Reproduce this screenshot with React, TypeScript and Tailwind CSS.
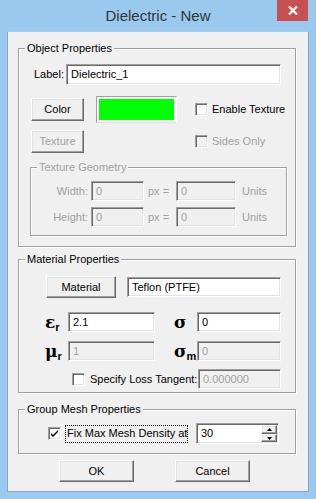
import React from 'react';

const font = { fontFamily: '"Liberation Sans", Arial, sans-serif' };

const sunken =
  'border border-t-[#a0a0a0] border-l-[#a0a0a0] border-r-white border-b-white shadow-[inset_1px_1px_0_#696969,inset_-1px_-1px_0_#e3e3e3]';
const raised =
  'border border-t-white border-l-white border-r-[#696969] border-b-[#696969] shadow-[inset_-1px_-1px_0_#a0a0a0,inset_1px_1px_0_#e3e3e3]';

function GroupBox({ title, className, disabled, children }: { title: string; className: string; disabled?: boolean; children: React.ReactNode }) {
  return (
    <div className={`relative border border-[#a0a0a0] shadow-[1px_1px_0_#fff,inset_1px_1px_0_#fff] ${className}`}>
      <span
        className={`absolute -top-[8px] left-[6px] bg-[#f0f0f0] px-[2px] leading-[14px] ${disabled ? 'text-[#a0a0a0]' : 'text-black'}`}
      >
        {title}
      </span>
      {children}
    </div>
  );
}

function Button({ label, className, disabled }: { label: string; className: string; disabled?: boolean }) {
  return (
    <div className={`flex items-center justify-center bg-[#f0f0f0] ${raised} ${disabled ? 'text-[#a0a0a0]' : 'text-black'} ${className}`}>
      {label}
    </div>
  );
}

function Input({ value, className, disabled }: { value: string; className: string; disabled?: boolean }) {
  return (
    <div
      className={`flex items-center pl-[4px] ${sunken} ${disabled ? 'bg-[#f0f0f0] text-[#a0a0a0]' : 'bg-white text-black'} ${className}`}
    >
      {value}
    </div>
  );
}

function Checkbox({ checked, disabled, className }: { checked?: boolean; disabled?: boolean; className?: string }) {
  return (
    <div
      className={`w-[13px] h-[13px] shrink-0 flex items-center justify-center ${sunken} ${disabled ? 'bg-[#f0f0f0]' : 'bg-white'} ${className ?? ''}`}
    >
      {checked && (
        <svg width="9" height="9" viewBox="0 0 9 9">
          <path d="M1 4 L3 6 L8 1 L8 3 L3 8 L1 6 Z" fill="#000" />
        </svg>
      )}
    </div>
  );
}

function Symbol({ base, sub }: { base: string; sub: string }) {
  return (
    <span className="flex items-end font-bold text-black" style={{ fontFamily: '"DejaVu Serif", "Liberation Serif", serif' }}>
      <span className="text-[17px] leading-[18px]">{base}</span>
      <span className="text-[11px] leading-[11px] mb-[-2px]" style={font}>{sub}</span>
    </span>
  );
}

export default function App() {
  return (
    <div className="w-[316px] h-[499px] bg-[#99c9ef] text-[11px] overflow-hidden" style={font}>
      {/* Title bar */}
      <div className="relative h-[31px] flex items-center justify-center">
        <span className="text-[15px] text-[#333333] pt-[1px]">Dielectric - New</span>
        <div className="absolute top-0 right-[8px] w-[31px] h-[21px] bg-[#c75050] flex items-center justify-center">
          <svg width="10" height="9" viewBox="0 0 10 9">
            <path d="M1 0.5 L9 8.5 M9 0.5 L1 8.5" stroke="#fff" strokeWidth="2.2" />
          </svg>
        </div>
      </div>

      {/* Client area */}
      <div className="ml-[7px] w-[302px] h-[461px] border border-[#83a7c9] border-t-[#a9cbe9] bg-[#f0f0f0] pt-[16px] pl-[10px]">
        {/* Object Properties */}
        <GroupBox title="Object Properties" className="w-[278px] h-[199px]">
          <div className="flex items-center mt-[15px] ml-[15px]">
            <span className="w-[32px]">Label:</span>
            <Input value="Dielectric_1" className="w-[215px] h-[21px]" />
          </div>
          <div className="flex items-center h-[27px] mt-[11px] ml-[12px]">
            <Button label="Color" className="w-[53px] h-[23px]" />
            <div className="ml-[12px] w-[81px] h-[27px] p-[2px] bg-white border border-t-[#a0a0a0] border-l-[#a0a0a0] border-r-white border-b-[#e3e3e3]">
              <div className="w-full h-full bg-[#00ff00]" />
            </div>
            <Checkbox className="ml-[18px]" />
            <span className="ml-[4px]">Enable Texture</span>
          </div>
          <div className="flex items-center h-[23px] mt-[7px] ml-[12px]">
            <Button label="Texture" className="w-[53px] h-[23px]" disabled />
            <Checkbox className="ml-[111px]" disabled />
            <span className="ml-[4px] text-[#a0a0a0]">Sides Only</span>
          </div>
          <GroupBox title="Texture Geometry" className="ml-[11px] mt-[14px] w-[257px] h-[69px]" disabled>
            <div className="flex items-center mt-[13px] text-[#a0a0a0]">
              <span className="w-[60px] text-right pr-[3px]">Width:</span>
              <Input value="0" className="w-[53px] h-[20px]" disabled />
              <span className="ml-[4px] w-[28px]">px =</span>
              <Input value="0" className="w-[60px] h-[20px]" disabled />
              <span className="ml-[6px]">Units</span>
            </div>
            <div className="flex items-center mt-[6px] text-[#a0a0a0]">
              <span className="w-[60px] text-right pr-[3px]">Height:</span>
              <Input value="0" className="w-[53px] h-[20px]" disabled />
              <span className="ml-[4px] w-[28px]">px =</span>
              <Input value="0" className="w-[60px] h-[20px]" disabled />
              <span className="ml-[6px]">Units</span>
            </div>
          </GroupBox>
        </GroupBox>

        {/* Material Properties */}
        <GroupBox title="Material Properties" className="mt-[12px] w-[278px] h-[134px]">
          <div className="flex items-center h-[22px] mt-[16px] ml-[27px]">
            <Button label="Material" className="w-[70px] h-[22px]" />
            <Input value="Teflon (PTFE)" className="ml-[11px] w-[154px] h-[20px]" />
          </div>
          <div className="flex items-center h-[20px] mt-[14px] ml-[26px]">
            <span className="w-[23px]"><Symbol base="ε" sub="r" /></span>
            <Input value="2.1" className="w-[87px] h-[20px]" />
            <span className="ml-[19px] w-[23px]"><Symbol base="σ" sub="" /></span>
            <Input value="0" className="w-[84px] h-[20px]" />
          </div>
          <div className="flex items-center h-[20px] mt-[9px] ml-[26px]">
            <span className="w-[23px]"><Symbol base="μ" sub="r" /></span>
            <Input value="1" className="w-[87px] h-[20px]" disabled />
            <span className="ml-[19px] w-[23px]"><Symbol base="σ" sub="m" /></span>
            <Input value="0" className="w-[84px] h-[20px]" disabled />
          </div>
          <div className="flex items-center h-[20px] mt-[8px] ml-[53px]">
            <Checkbox />
            <span className="ml-[5px] w-[108px]">Specify Loss Tangent:</span>
            <Input value="0.000000" className="w-[83px] h-[20px]" disabled />
          </div>
        </GroupBox>

        {/* Group Mesh Properties */}
        <GroupBox title="Group Mesh Properties" className="mt-[16px] w-[278px] h-[45px]">
          <div className="flex items-center h-[21px] mt-[13px] ml-[29px]">
            <Checkbox checked />
            <span className="ml-[4px] w-[123px] h-[18px] flex items-center pl-[1px] whitespace-nowrap border border-dotted border-black">
              Fix Max Mesh Density at
            </span>
            <div className={`relative ml-[8px] w-[83px] h-[21px] bg-white flex items-center pl-[4px] ${sunken}`}>
              30
              <div className="absolute right-[1px] top-[1px] w-[16px] h-[17px] flex flex-col">
                <div className={`h-[9px] bg-[#f0f0f0] flex items-center justify-center ${raised}`}>
                  <svg width="5" height="3" viewBox="0 0 5 3"><path d="M2.5 0 L5 3 L0 3 Z" fill="#000" /></svg>
                </div>
                <div className={`h-[8px] bg-[#f0f0f0] flex items-center justify-center ${raised}`}>
                  <svg width="5" height="3" viewBox="0 0 5 3"><path d="M0 0 L5 0 L2.5 3 Z" fill="#000" /></svg>
                </div>
              </div>
            </div>
          </div>
        </GroupBox>

        {/* Buttons */}
        <div className="flex items-center mt-[6px] ml-[41px]">
          <Button label="OK" className="w-[75px] h-[22px]" />
          <Button label="Cancel" className="ml-[41px] w-[75px] h-[22px]" />
        </div>
      </div>
    </div>
  );
}
